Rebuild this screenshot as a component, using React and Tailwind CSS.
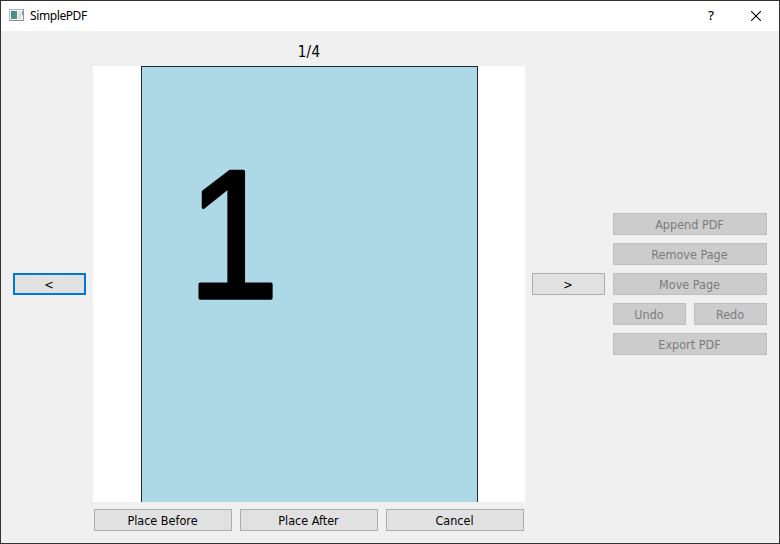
import React from "react";

function Button({ children, className = "w-[73px]", disabled = false, focused = false }) {
  const look = disabled
    ? "border border-[#bfbfbf] bg-[#cccccc] text-[#7c7c7c]"
    : focused
      ? "border-2 border-[#0078d7] bg-[#e1e1e1] text-black"
      : "border border-[#adadad] bg-[#e1e1e1] text-black";
  return (
    <button
      type="button"
      disabled={disabled}
      className={`flex h-[22px] shrink-0 items-center justify-center whitespace-nowrap text-[12.5px] leading-[14px] ${look} ${className}`}
    >
      <span className="pt-px pr-px">{children}</span>
    </button>
  );
}

function TitleBar() {
  return (
    <header className="flex h-[30px] shrink-0 items-center bg-white pl-2 font-['Noto_Sans',sans-serif] text-black">
      <svg width="15" height="12" viewBox="0 0 15 12" shapeRendering="crispEdges" className="mb-[2px]">
        <defs>
          <linearGradient id="pane" x1="0" y1="0" x2="1" y2="1">
            <stop offset="0" stopColor="#4a7ba8" />
            <stop offset="1" stopColor="#4fa66c" />
          </linearGradient>
        </defs>
        <rect width="15" height="12" fill="#b4b9bc" />
        <rect y="11" width="15" height="1" fill="#8d9193" />
        <rect x="14" width="1" height="12" fill="#929799" />
        <rect x="1" y="1" width="13" height="10" fill="#f4f4f4" />
        <rect x="2" y="2" width="6" height="8" fill="url(#pane)" />
        <rect x="9" y="3" width="3" height="7" fill="#dddddd" />
        <rect x="13" y="2" width="1" height="4" fill="#65a38d" />
      </svg>
      <span className="ml-[6px] text-[12px] leading-4 tracking-[-0.4px]">SimplePDF</span>
      <span className="mr-[37px] mb-[2px] ml-auto text-[13px] leading-4 [-webkit-text-stroke:0.2px_#000]">?</span>
      <svg width="10" height="10" viewBox="0 0 10 10" className="mr-[18px] mb-px" stroke="#000" strokeWidth="1.1">
        <path d="M0 0L10 10M10 0L0 10" />
      </svg>
    </header>
  );
}

function PageView() {
  return (
    <div className="flex h-[436px] w-[432px] justify-center bg-white">
      <div className="h-full w-[337px] border-x border-t border-[#20292c] bg-[#add8e6]">
        <svg width="335" height="435" viewBox="0 0 335 435">
          <text
            transform="translate(45.6 231) scale(0.9 1)"
            fontFamily="'Liberation Sans', sans-serif"
            fontSize="183"
            stroke="#000"
            strokeWidth="3.5"
            strokeLinejoin="round"
          >
            1
          </text>
        </svg>
      </div>
    </div>
  );
}

export default function App() {
  return (
    <div className="flex h-[544px] w-[780px] flex-col border border-[#333333] bg-[#f0f0f0] font-['DejaVu_Sans_Condensed','DejaVu_Sans',sans-serif] [font-stretch:condensed]">
      <TitleBar />
      <main className="flex grow pl-3">
        <div className="mt-[242px]">
          <Button focused>&lt;</Button>
        </div>
        <section className="ml-[7px] flex w-[432px] flex-col">
          <div className="flex h-[35px] items-center justify-center pt-[6px] text-[15px] leading-4 tracking-[0.3px] text-black">1/4</div>
          <PageView />
          <div className="mt-[7px] flex justify-center gap-2">
            <Button className="w-[138px]">Place Before</Button>
            <Button className="w-[138px]">Place After</Button>
            <Button className="w-[138px]">Cancel</Button>
          </div>
        </section>
        <div className="mt-[242px] ml-[7px]">
          <Button>&gt;</Button>
        </div>
        <aside className="mt-[182px] ml-2 flex w-[154px] flex-col gap-2">
          <Button disabled className="w-full">Append PDF</Button>
          <Button disabled className="w-full">Remove Page</Button>
          <Button disabled className="w-full">Move Page</Button>
          <div className="flex gap-2">
            <Button disabled>Undo</Button>
            <Button disabled>Redo</Button>
          </div>
          <Button disabled className="w-full">Export PDF</Button>
        </aside>
      </main>
    </div>
  );
}
